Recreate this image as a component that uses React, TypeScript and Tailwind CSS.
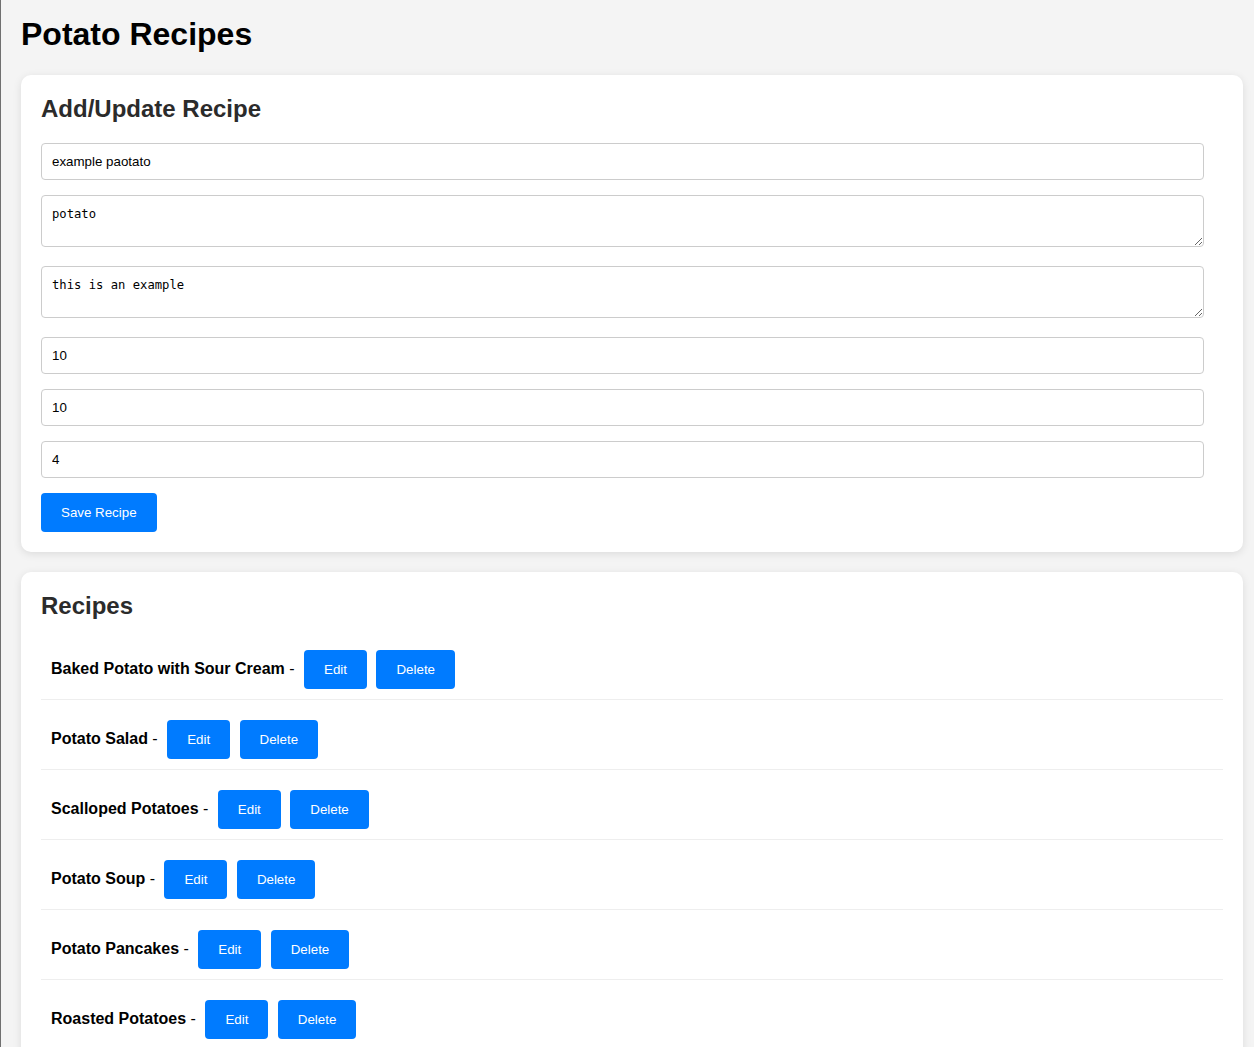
import { useState } from "react";

type Recipe = {
  name: string;
  ingredients: string;
  instructions: string;
  prepTime: string;
  cookTime: string;
  servings: string;
};

const initialRecipes: Recipe[] = [
  { name: "Baked Potato with Sour Cream", ingredients: "", instructions: "", prepTime: "", cookTime: "", servings: "" },
  { name: "Potato Salad", ingredients: "", instructions: "", prepTime: "", cookTime: "", servings: "" },
  { name: "Scalloped Potatoes", ingredients: "", instructions: "", prepTime: "", cookTime: "", servings: "" },
  { name: "Potato Soup", ingredients: "", instructions: "", prepTime: "", cookTime: "", servings: "" },
  { name: "Potato Pancakes", ingredients: "", instructions: "", prepTime: "", cookTime: "", servings: "" },
  { name: "Roasted Potatoes", ingredients: "", instructions: "", prepTime: "", cookTime: "", servings: "" },
];

const inputClass =
  "block w-[calc(100%-19px)] h-[37px] px-[10px] border border-[#ccc] rounded-[4px] bg-white text-[13.33px] text-black leading-[normal] outline-none";
const areaClass =
  "block w-[calc(100%-19px)] h-[52px] px-[10px] pt-[11px] pb-[9px] border border-[#ccc] rounded-[4px] bg-white text-[12.2px] text-black leading-[normal] font-['DejaVu_Sans_Mono',monospace] outline-none";
const buttonClass =
  "h-[39px] px-5 rounded-[4px] bg-[#007bff] text-white text-[13.33px] leading-[normal] cursor-pointer";

export default function App() {
  const [recipes, setRecipes] = useState<Recipe[]>(initialRecipes);
  const [form, setForm] = useState<Recipe>({
    name: "example paotato",
    ingredients: "potato",
    instructions: "this is an example",
    prepTime: "10",
    cookTime: "10",
    servings: "4",
  });

  const update = (key: keyof Recipe, value: string) =>
    setForm((prev) => ({ ...prev, [key]: value }));

  const save = () => {
    if (!form.name.trim()) return;
    setRecipes((prev) => {
      const idx = prev.findIndex((r) => r.name === form.name);
      if (idx === -1) return [...prev, form];
      return prev.map((r, i) => (i === idx ? form : r));
    });
  };

  return (
    <div className="min-h-screen bg-[#f4f4f4] border-l border-[#707070] pl-5 pr-[11px] pb-5 font-['Liberation_Sans',Arial,sans-serif]">
      <h1 className="pt-[16px] mb-[22px] text-[32px] leading-[37px] font-bold text-black">
        Potato Recipes
      </h1>

      <div className="bg-white rounded-[10px] p-5 shadow-[0_2px_8px_rgba(0,0,0,0.1)]">
        <h2 className="mb-5 text-[24px] leading-[28px] font-bold text-[#2b2b2b]">
          Add/Update Recipe
        </h2>
        <input
          className={`${inputClass} mb-[15px]`}
          value={form.name}
          onChange={(e) => update("name", e.target.value)}
        />
        <textarea
          className={`${areaClass} mb-[19px]`}
          value={form.ingredients}
          onChange={(e) => update("ingredients", e.target.value)}
        />
        <textarea
          className={`${areaClass} mb-[19px]`}
          value={form.instructions}
          onChange={(e) => update("instructions", e.target.value)}
        />
        <input
          className={`${inputClass} mb-[15px]`}
          value={form.prepTime}
          onChange={(e) => update("prepTime", e.target.value)}
        />
        <input
          className={`${inputClass} mb-[15px]`}
          value={form.cookTime}
          onChange={(e) => update("cookTime", e.target.value)}
        />
        <input
          className={`${inputClass} mb-[15px]`}
          value={form.servings}
          onChange={(e) => update("servings", e.target.value)}
        />
        <button className={buttonClass} onClick={save}>
          Save Recipe
        </button>
      </div>

      <div className="mt-5 bg-white rounded-[10px] p-5 shadow-[0_2px_8px_rgba(0,0,0,0.1)]">
        <h2 className="mb-[10px] text-[24px] leading-[28px] font-bold text-[#2b2b2b]">
          Recipes
        </h2>
        <ul>
          {recipes.map((recipe) => (
            <li
              key={recipe.name}
              className="pl-[10px] pt-5 pb-[10px] border-b border-[#eee] text-[16px] leading-[normal] text-black"
            >
              <strong className="font-bold">{recipe.name}</strong> -{" "}
              <button
                className={`${buttonClass} inline-block align-middle ml-[5px]`}
                onClick={() => setForm(recipe)}
              >
                Edit
              </button>{" "}
              <button
                className={`${buttonClass} inline-block align-middle ml-[5px]`}
                onClick={() =>
                  setRecipes((prev) => prev.filter((r) => r.name !== recipe.name))
                }
              >
                Delete
              </button>
            </li>
          ))}
        </ul>
      </div>
    </div>
  );
}
